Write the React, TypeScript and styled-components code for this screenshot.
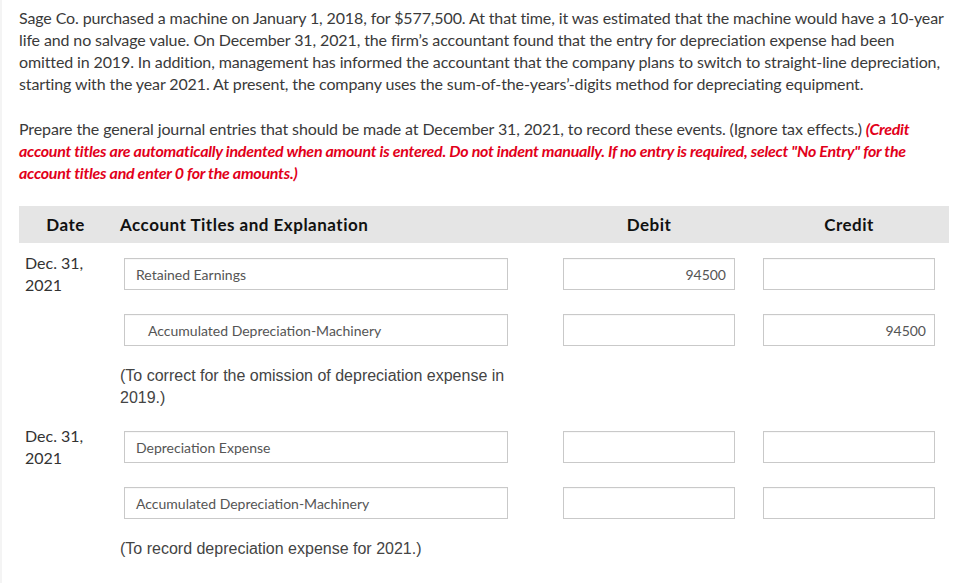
import * as React from 'react';
import styled, { createGlobalStyle } from 'styled-components';

const GlobalStyle = createGlobalStyle`
  html, body {
    margin: 0;
    padding: 0;
    background: #fff;
  }
  body {
    font-family: Lato, "Noto Sans", sans-serif;
    color: #333;
  }
`

const Page = styled.div`
  width: 956px;
  padding: 7px 0 20px 17px;
  box-sizing: border-box;
  border-left: 2px solid #f4f4f4;
`

const Paragraph = styled.p`
  margin: 0 0 23px 0;
  width: 935px;
  font-size: 16px;
  letter-spacing: -0.12px;
  line-height: 22px;
  color: #3a3a3a;
  white-space: nowrap;
`

const Hint = styled.span`
  color: #e2001a;
  font-weight: 700;
  font-style: italic;
  letter-spacing: -0.27px;
`

const Journal = styled.div`
  width: 930px;
  margin-top: -1px;
`

const Grid = styled.div`
  display: grid;
  grid-template-columns: 93px 437px 200px 200px;
  align-items: start;
`

const HeaderRow = styled(Grid)`
  background: #e5e5e5;
  height: 37px;
  align-items: center;
`

declare type HeadCellPropsType = {
  align: 'left' | 'center'
}

const HeadCell = styled.div<HeadCellPropsType>`
  font-size: 17px;
  font-weight: 700;
  letter-spacing: 0.5px;
  color: #111;
  text-align: ${(props) => props.align};
  padding-left: ${(props) => (props.align === 'left' ? '8px' : '0')};
`

const EntryRow = styled(Grid)`
  box-sizing: border-box;
  height: 56px;
  padding-top: 9px;
`

const DateCell = styled.div`
  padding-left: 6px;
  font-size: 16px;
  line-height: 22px;
  color: #333;
`

const FieldCell = styled.div`
  padding: 6px 0 0 12px;
`

const AmountCell = styled.div`
  display: flex;
  justify-content: center;
  padding-top: 6px;
`

declare type BoxPropsType = {
  indent?: boolean
  numeric?: boolean
}

const Box = styled.div<BoxPropsType>`
  box-sizing: border-box;
  height: 32px;
  border: 1px solid #c9c9c9;
  box-shadow: inset 0 1px 1px rgba(0, 0, 0, 0.03);
  background: #fff;
  display: flex;
  align-items: center;
  justify-content: ${(props) => (props.numeric ? 'flex-end' : 'flex-start')};
  padding: ${(props) => (props.numeric ? '0 8px 0 0' : props.indent ? '0 0 0 23px' : '0 0 0 11px')};
  font-size: 14px;
  color: #555;
`

const AccountBox = styled(Box)`
  width: 384px;
`

const AmountBox = styled(Box)`
  width: 172px;
`

const Explanation = styled.div`
  grid-column: 2 / 3;
  padding: 10px 0 7px 8px;
  width: 392px;
  font-family: "Liberation Sans", Arial, sans-serif;
  font-size: 16px;
  line-height: 22px;
  color: #444;
`

const ExplanationRow = styled(Grid)``

declare type LineType = {
  date?: string[]
  account: string
  indent: boolean
  debit: string
  credit: string
}

declare type EntryType = {
  lines: LineType[]
  note: string
}

const entries: EntryType[] = [
  {
    lines: [
      { date: ['Dec. 31,', '2021'], account: 'Retained Earnings', indent: false, debit: '94500', credit: '' },
      { account: 'Accumulated Depreciation-Machinery', indent: true, debit: '', credit: '94500' },
    ],
    note: '(To correct for the omission of depreciation expense in 2019.)',
  },
  {
    lines: [
      { date: ['Dec. 31,', '2021'], account: 'Depreciation Expense', indent: false, debit: '', credit: '' },
      { account: 'Accumulated Depreciation-Machinery', indent: false, debit: '', credit: '' },
    ],
    note: '(To record depreciation expense for 2021.)',
  },
]

const App: React.FunctionComponent = () => {
  return (
    <Page>
      <GlobalStyle />
      <Paragraph>
        Sage Co. purchased a machine on January 1, 2018, for $577,500. At that time, it was estimated that the machine would have a 10-year
        <br />
        life and no salvage value. On December 31, 2021, the firm’s accountant found that the entry for depreciation expense had been
        <br />
        omitted in 2019. In addition, management has informed the accountant that the company plans to switch to straight-line depreciation,
        <br />
        starting with the year 2021. At present, the company uses the sum-of-the-years’-digits method for depreciating equipment.
      </Paragraph>
      <Paragraph>
        Prepare the general journal entries that should be made at December 31, 2021, to record these events. (Ignore tax effects.){' '}
        <Hint>
          (Credit
          <br />
          account titles are automatically indented when amount is entered. Do not indent manually. If no entry is required, select "No Entry" for the
          <br />
          account titles and enter 0 for the amounts.)
        </Hint>
      </Paragraph>
      <Journal>
        <HeaderRow>
          <HeadCell align="center">Date</HeadCell>
          <HeadCell align="left">Account Titles and Explanation</HeadCell>
          <HeadCell align="center">Debit</HeadCell>
          <HeadCell align="center">Credit</HeadCell>
        </HeaderRow>
        {entries.map((entry, i) => (
          <React.Fragment key={i}>
            {entry.lines.map((line, j) => (
              <EntryRow key={j}>
                <DateCell>
                  {line.date && line.date.map((part) => <div key={part}>{part}</div>)}
                </DateCell>
                <FieldCell>
                  <AccountBox indent={line.indent}>{line.account}</AccountBox>
                </FieldCell>
                <AmountCell>
                  <AmountBox numeric>{line.debit}</AmountBox>
                </AmountCell>
                <AmountCell>
                  <AmountBox numeric>{line.credit}</AmountBox>
                </AmountCell>
              </EntryRow>
            ))}
            <ExplanationRow>
              <Explanation>{entry.note}</Explanation>
            </ExplanationRow>
          </React.Fragment>
        ))}
      </Journal>
    </Page>
  )
}

export default App
